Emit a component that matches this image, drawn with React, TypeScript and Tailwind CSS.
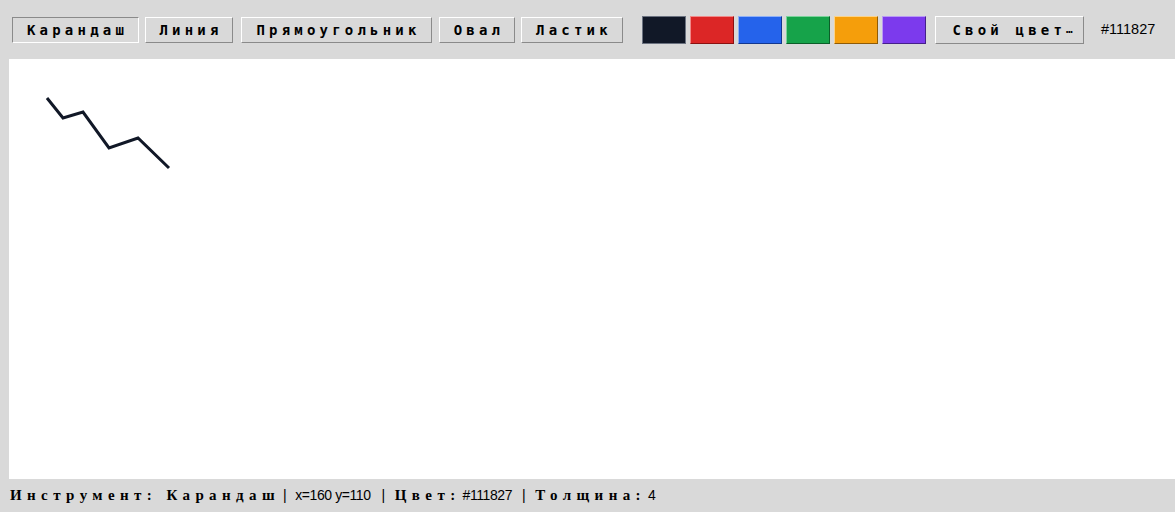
import React from "react";

const tools = [
  { name: "Карандаш", cls: "w-[127px]" },
  { name: "Линия", cls: "w-[88px] ml-[6px]" },
  { name: "Прямоугольник", cls: "w-[191px] ml-[8px]" },
  { name: "Овал", cls: "w-[76px] ml-[7px]" },
  { name: "Ластик", cls: "w-[102px] ml-[6px]" },
];

const swatches = [
  { color: "#111827", cls: "bg-[#111827] border border-[#6b7280]" },
  { color: "#dc2626", cls: "bg-[#dc2626] border border-t-[#f08a8a] border-l-[#f08a8a] border-b-[#8b1010] border-r-[#8b1010]" },
  { color: "#2563eb", cls: "bg-[#2563eb] border border-t-[#8fb0f7] border-l-[#8fb0f7] border-b-[#12378f] border-r-[#12378f]" },
  { color: "#16a34a", cls: "bg-[#16a34a] border border-t-[#7bd39b] border-l-[#7bd39b] border-b-[#0b5e29] border-r-[#0b5e29]" },
  { color: "#f59e0b", cls: "bg-[#f59e0b] border border-t-[#fbd38a] border-l-[#fbd38a] border-b-[#8f5b06] border-r-[#8f5b06]" },
  { color: "#7c3aed", cls: "bg-[#7c3aed] border border-t-[#b99af5] border-l-[#b99af5] border-b-[#45208a] border-r-[#45208a]" },
];

const btnFont = "font-['DejaVu_Sans_Mono',monospace] font-bold text-[14px] tracking-[0.3em] text-black";
const outset = "border border-t-white border-l-white border-b-[#8a8a8a] border-r-[#8a8a8a]";
const inset = "border border-t-[#8a8a8a] border-l-[#8a8a8a] border-b-white border-r-white";
const label = "font-['Liberation_Serif',serif] font-bold text-[15px] tracking-[0.36em] text-black";
const small = "font-['Liberation_Sans',sans-serif] text-[14px] text-black tracking-[-0.03em]";

export default function App() {
  const active = "Карандаш";
  return (
    <div className="w-[1175px] h-[512px] bg-[#d9d9d9] flex flex-col overflow-hidden">
      {/* toolbar */}
      <div className="h-[59px] flex items-center pl-[12px] pt-[1px]">
        <div className="flex">
          {tools.map((t) => (
            <button
              key={t.name}
              className={`h-[26px] pl-[4px] flex items-center justify-center bg-[#d9d9d9] ${t.cls} ${t.name === active ? inset : outset} ${btnFont}`}
            >
              {t.name}
            </button>
          ))}
        </div>
        <div className="flex gap-[4px] ml-[19px]">
          {swatches.map((s) => (
            <div key={s.color} className={`w-[44px] h-[28px] ${s.cls}`} />
          ))}
        </div>
        <button className={`ml-[9px] h-[28px] w-[149px] pl-[4px] flex items-center justify-center bg-[#d9d9d9] ${outset} ${btnFont}`}>
          Свой цвет<span className="tracking-[-0.2em] text-[11px]">…</span>
        </button>
        <span className="ml-[17px] font-['Liberation_Sans',sans-serif] text-[14.5px] text-black">#111827</span>
      </div>

      {/* canvas */}
      <div className="pl-[9px] h-[420px] flex">
        <div className="flex-1 bg-white relative">
          <svg className="absolute inset-0" width="1166" height="420">
            <polyline
              points="38,39 54,59 74,53 100,89 129,79 160,109"
              fill="none"
              stroke="#111827"
              strokeWidth="3"
              strokeLinejoin="miter"
            />
          </svg>
        </div>
      </div>

      {/* status */}
      <div className="flex-1 flex items-center pl-[10px] pb-[1px] whitespace-pre">
        <span className={label}>Инструмент: Карандаш</span>
        <span className={`${small} ml-[3px] mr-[9px]`}>|</span>
        <span className={small}>x=160 y=110</span>
        <span className={`${small} ml-[11px] mr-[10px]`}>|</span>
        <span className={label}>Цвет:</span>
        <span className={`${small} ml-[2px]`}>#111827</span>
        <span className={`${small} ml-[10px] mr-[10px]`}>|</span>
        <span className={label}>Толщина:</span>
        <span className={`${small} ml-[2px]`}>4</span>
      </div>
    </div>
  );
}
